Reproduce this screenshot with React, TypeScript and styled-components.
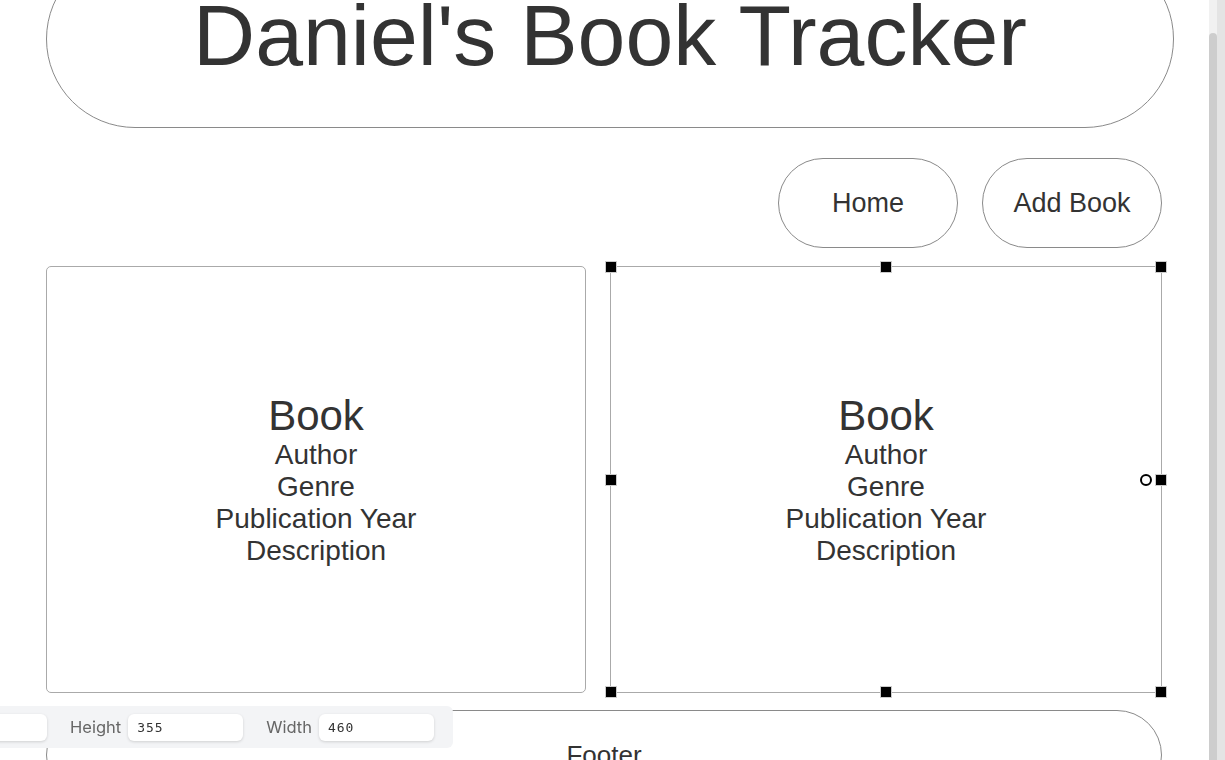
import React, { useLayoutEffect, useRef } from "react";
import styled, { createGlobalStyle } from "styled-components";

const GlobalStyle = createGlobalStyle`
  html, body {
    margin: 0;
    padding: 0;
    height: 100%;
    overflow: hidden;
    background: #fff;
  }
  #root {
    height: 100%;
  }
`;

const Scroller = styled.div`
  height: 100vh;
  overflow-y: scroll;
  scrollbar-width: none;
  font-family: "Liberation Sans", Arial, sans-serif;
  color: #333;
  &::-webkit-scrollbar {
    display: none;
  }
`;

// the page's own scrollbar, drawn over the right edge
const ScrollTrack = styled.div`
  position: fixed;
  top: 0;
  right: 0;
  width: 16px;
  height: 100vh;
  background: linear-gradient(to right, #f1f1f1 50%, #e4e4e4 50%);
`;

const ScrollThumb = styled.div`
  position: absolute;
  left: 0;
  top: 33px;
  width: 8px;
  height: 760px;
  background: #cdcdcd;
  border-radius: 4px 4px 0 0;
`;

const Page = styled.div`
  width: 1116px;
  padding: 0 0 40px 46px;
  display: flex;
  flex-direction: column;
`;

const Header = styled.header`
  width: 1128px;
  height: 178px;
  box-sizing: border-box;
  border: 1px solid #8a8a8a;
  border-radius: 95px;
  display: flex;
  align-items: center;
  justify-content: center;
`;

const Title = styled.h1`
  margin: 0 0 8px;
  font-size: 86px;
  font-weight: normal;
  line-height: 1;
`;

const Nav = styled.nav`
  margin-top: 30px;
  display: flex;
  justify-content: flex-end;
  gap: 24px;
`;

const NavButton = styled.button`
  width: 180px;
  height: 90px;
  border: 1px solid #8a8a8a;
  border-radius: 45px;
  background: #fff;
  font-family: "Liberation Sans", Arial, sans-serif;
  font-size: 27px;
  color: #333;
  cursor: pointer;
`;

const Cards = styled.section`
  margin-top: 18px;
  display: grid;
  grid-template-columns: 540px 552px;
  gap: 24px;
`;

const Card = styled.div<{ $selected?: boolean }>`
  position: relative;
  height: 427px;
  box-sizing: border-box;
  border: 1px solid #aaa;
  border-radius: ${({ $selected }) => ($selected ? "0" : "5px")};
  display: flex;
  flex-direction: column;
  align-items: center;
  justify-content: center;
`;

const BookTitle = styled.div`
  font-size: 42px;
  line-height: 46px;
`;

const BookLine = styled.div`
  font-size: 28px;
  line-height: 32px;
`;

const Handle = styled.span<{ $x: string; $y: string }>`
  position: absolute;
  left: ${({ $x }) => $x};
  top: ${({ $y }) => $y};
  width: 10px;
  height: 10px;
  margin: -6px 0 0 -6px;
  background: #000;
  border: 1px solid #ccc;
`;

const RotateKnob = styled.span`
  position: absolute;
  right: 9px;
  top: 50%;
  width: 8px;
  height: 8px;
  margin-top: -6px;
  border: 2px solid #000;
  border-radius: 50%;
  background: #fff;
`;

const Footer = styled.footer`
  margin-top: 17px;
  height: 90px;
  box-sizing: border-box;
  border: 1px solid #8a8a8a;
  border-radius: 45px;
  display: flex;
  align-items: center;
  justify-content: center;
  font-size: 26px;
`;

const Toolbar = styled.div`
  position: fixed;
  left: -78px;
  top: 706px;
  height: 42px;
  box-sizing: border-box;
  padding: 0 19px 0 10px;
  background: #f3f4f6;
  border-radius: 6px;
  display: flex;
  align-items: center;
  font-family: Inter, "Noto Sans", sans-serif;
`;

const Field = styled.label`
  display: flex;
  align-items: center;
  gap: 7px;
  margin-left: 23px;
  font-size: 16.5px;
  color: #666;
  &:first-child {
    margin-left: 0;
  }
`;

const SizeInput = styled.input`
  width: 115px;
  height: 27px;
  box-sizing: border-box;
  padding: 0 9px;
  border: none;
  border-radius: 6px;
  background: #fff;
  box-shadow: 0 1px 3px rgba(0, 0, 0, 0.15);
  font-family: "DejaVu Sans Mono", monospace;
  font-size: 13px;
  letter-spacing: 1px;
  color: #333;
  outline: none;
`;

const books = [
  { title: "Book", author: "Author", genre: "Genre", year: "Publication Year", description: "Description" },
  { title: "Book", author: "Author", genre: "Genre", year: "Publication Year", description: "Description" },
];

const handles: [string, string][] = [
  ["0%", "0%"],
  ["50%", "0%"],
  ["100%", "0%"],
  ["0%", "50%"],
  ["100%", "50%"],
  ["0%", "100%"],
  ["50%", "100%"],
  ["100%", "100%"],
];

export default function App() {
  const scroller = useRef<HTMLDivElement>(null);

  useLayoutEffect(() => {
    if (scroller.current) scroller.current.scrollTop = 50;
  }, []);

  return (
    <>
      <GlobalStyle />
      <Scroller ref={scroller}>
        <Page>
          <Header>
            <Title>Daniel's Book Tracker</Title>
          </Header>
          <Nav>
            <NavButton>Home</NavButton>
            <NavButton>Add Book</NavButton>
          </Nav>
          <Cards>
            {books.map((book, i) => (
              <Card key={i} $selected={i === 1}>
                <BookTitle>{book.title}</BookTitle>
                <BookLine>{book.author}</BookLine>
                <BookLine>{book.genre}</BookLine>
                <BookLine>{book.year}</BookLine>
                <BookLine>{book.description}</BookLine>
                {i === 1 && (
                  <>
                    {handles.map(([x, y]) => (
                      <Handle key={x + y} $x={x} $y={y} />
                    ))}
                    <RotateKnob />
                  </>
                )}
              </Card>
            ))}
          </Cards>
          <Footer>Footer</Footer>
        </Page>
      </Scroller>
      <ScrollTrack>
        <ScrollThumb />
      </ScrollTrack>
      <Toolbar>
        <Field>
          <SizeInput defaultValue="" />
        </Field>
        <Field>
          Height
          <SizeInput defaultValue="355" />
        </Field>
        <Field>
          Width
          <SizeInput defaultValue="460" />
        </Field>
      </Toolbar>
    </>
  );
}
